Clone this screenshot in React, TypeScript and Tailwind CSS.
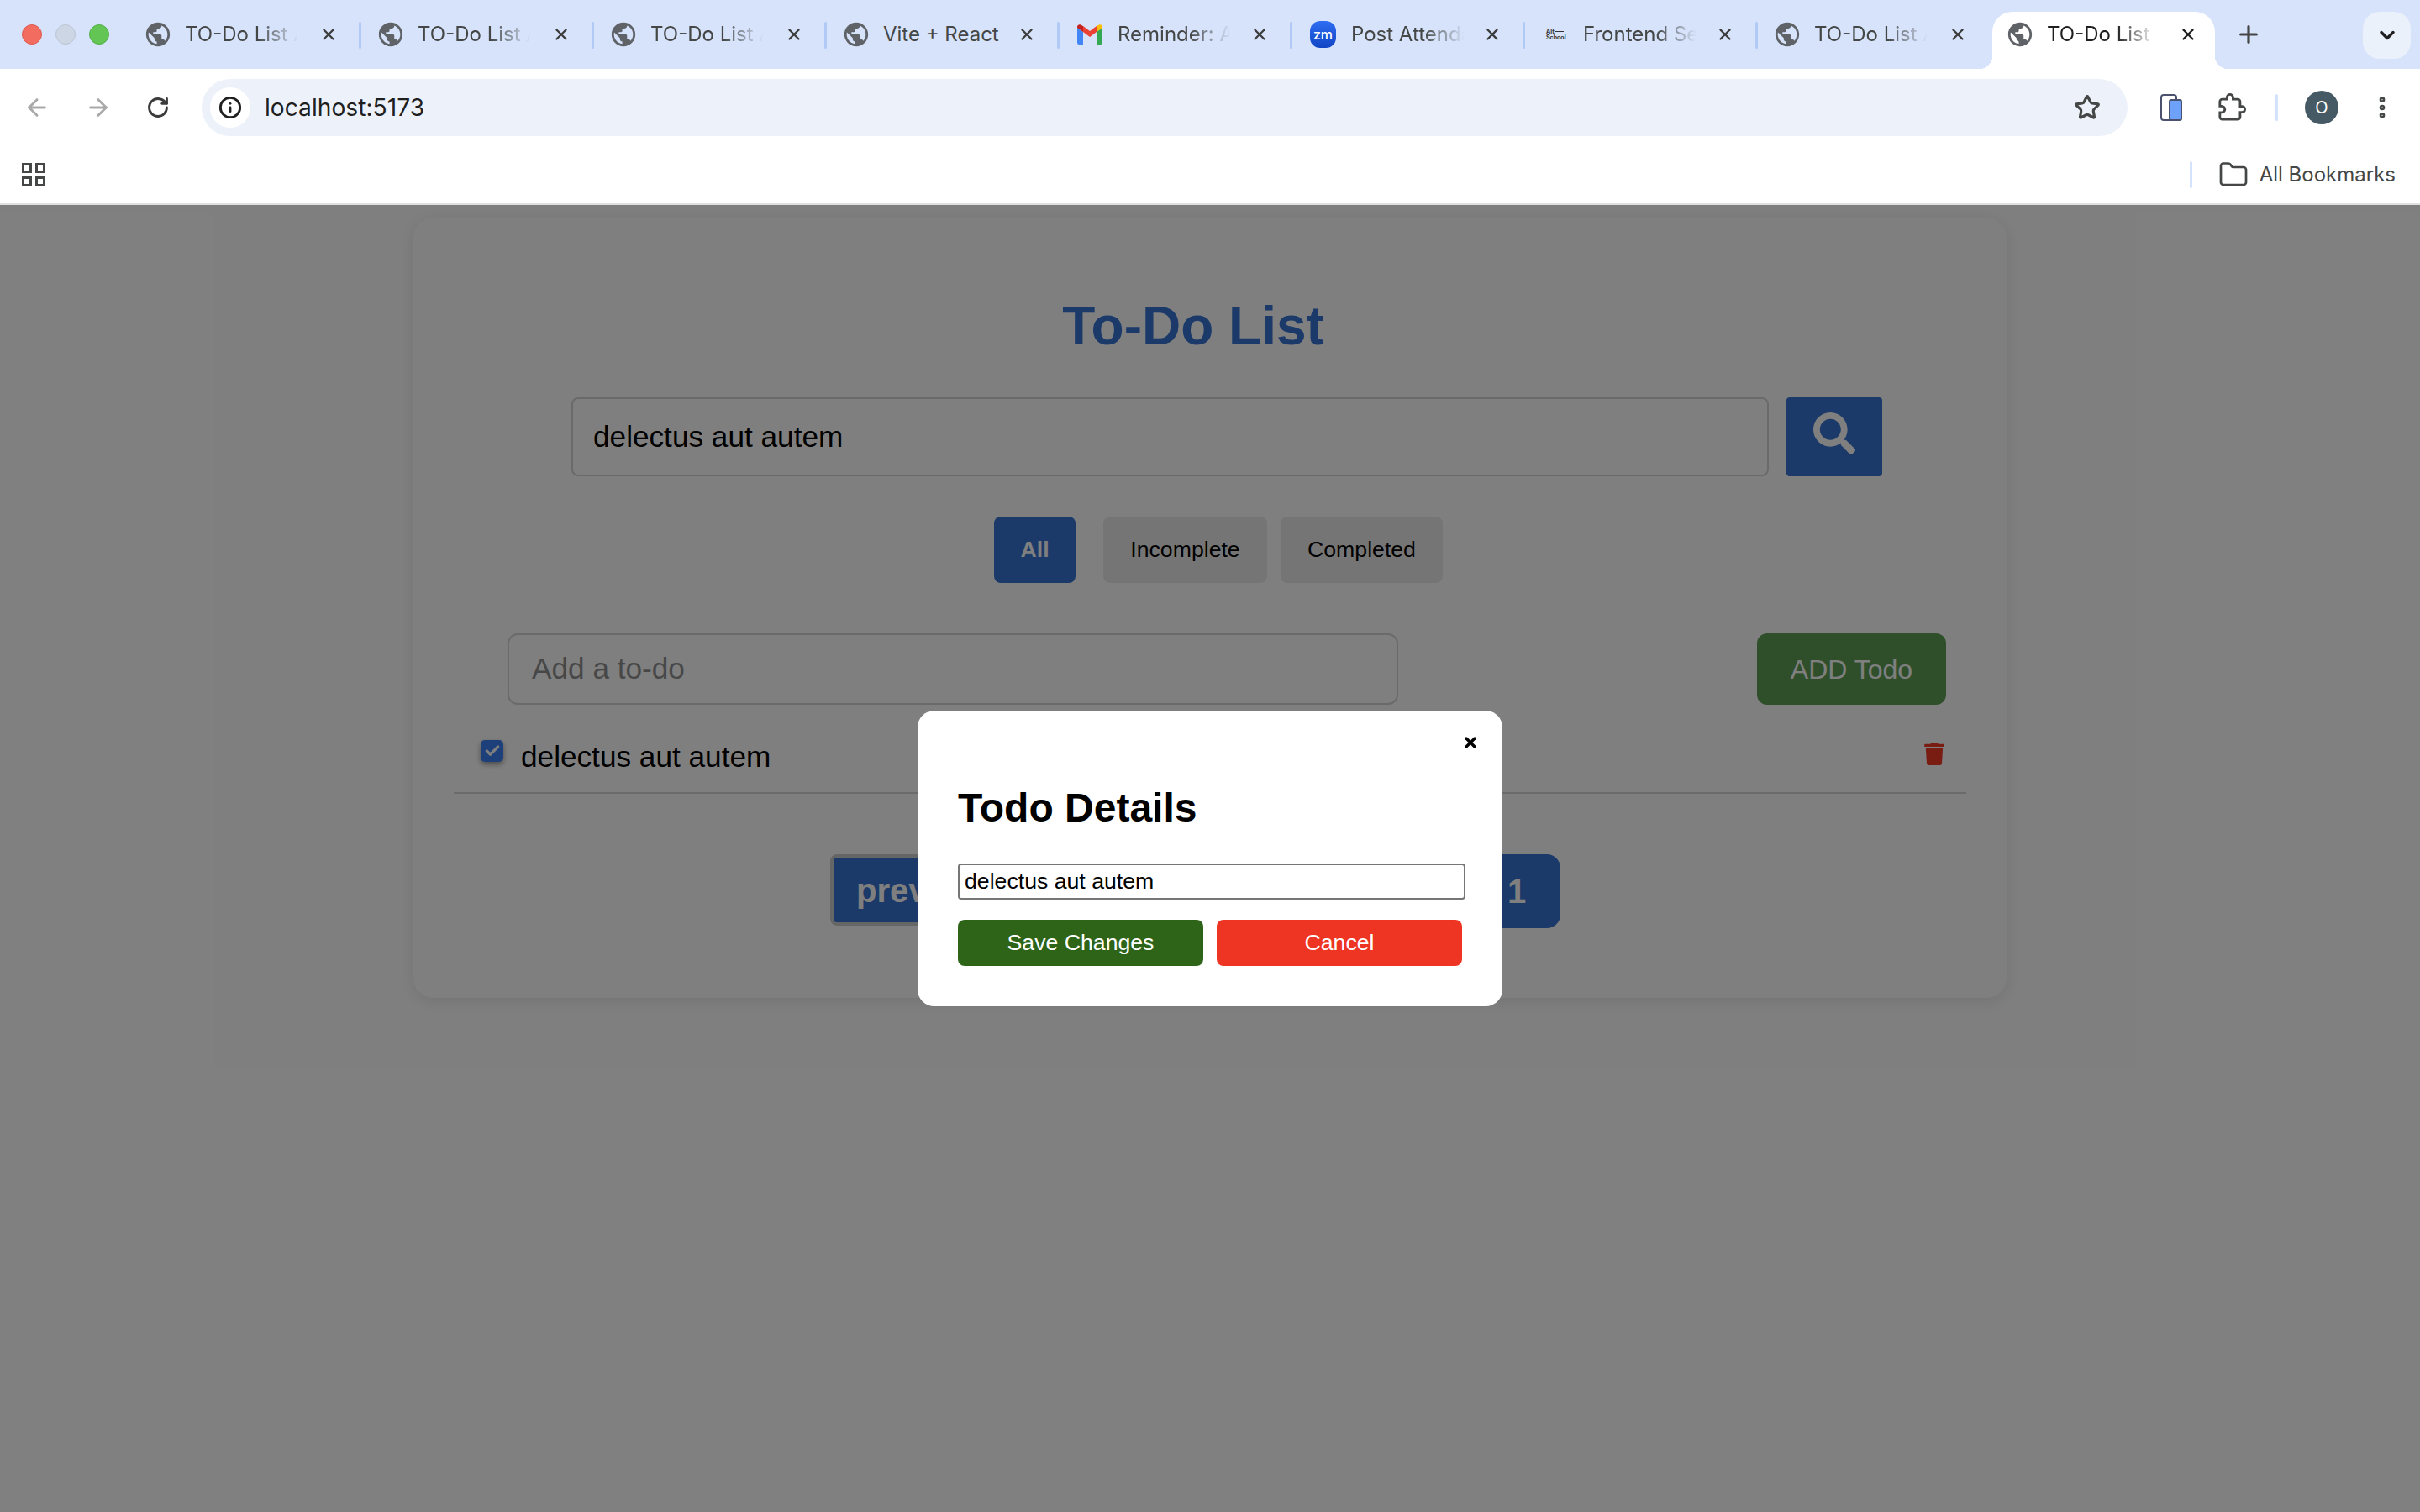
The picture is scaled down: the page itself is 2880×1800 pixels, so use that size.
import { ArrowLeft, ArrowRight, Check, ChevronDown, EllipsisVertical, Folder, Info, Plus, RotateCw, Star, X } from "lucide-react";
import { FaSearch, FaTrash } from "react-icons/fa";

const CHROME_FONT = "font-['Inter','Liberation_Sans',sans-serif]";

function Globe() {
  return (
    <svg viewBox="0 0 24 24" className="w-[34px] h-[34px] shrink-0 -ml-[3px] -mr-[3px]" fill="#5f6368">
      <path d="M12 2C6.48 2 2 6.48 2 12s4.48 10 10 10 10-4.48 10-10S17.52 2 12 2zm-1 17.93c-3.95-.49-7-3.85-7-7.93 0-.62.08-1.21.21-1.79L9 15v1c0 1.1.9 2 2 2v1.93zm6.9-2.54c-.26-.81-1-1.39-1.9-1.39h-1v-3c0-.55-.45-1-1-1H8v-2h2c.55 0 1-.45 1-1V7h2c1.1 0 2-.9 2-2v-.41c2.93 1.19 5 4.06 5 7.41 0 2.08-.8 3.97-2.1 5.39z" />
    </svg>
  );
}

function Gmail() {
  return (
    <svg viewBox="0 0 30 24" className="w-[30px] h-[24px] shrink-0">
      <path fill="#4285f4" d="M0 4v17.5A2.5 2.5 0 0 0 2.500 24H7V9z" />
      <path fill="#34a853" d="M23 9v15h4.500a2.500 2.500 0 0 0 2.500-2.500V4z" />
      <path fill="#ea4335" d="M7 9l8 6 8-6V2l-8 6-8-6z" />
      <path fill="#c5221f" d="M0 4l7 5V2L4.500.700C2.500-.6 0 .8 0 3.200z" />
      <path fill="#fbbc04" d="M30 4l-7 5V2l2.500-1.300C27.500-.6 30 .8 30 3.200z" />
    </svg>
  );
}

function Zoom() {
  return (
    <div className="w-[31px] h-[32px] shrink-0 rounded-[12px] bg-gradient-to-b from-[#2f6df2] to-[#1044c4] flex items-center justify-center text-white text-[16px] font-medium leading-none">
      zm
    </div>
  );
}

function AltSchool() {
  return (
    <div className="w-[30px] shrink-0 flex flex-col items-start pl-1 text-[7px] font-bold leading-[7px] text-[#333]">
      <span className="flex items-center gap-[1px]">Alt<span className="w-[10px] h-[1px] bg-[#333]" /></span>
      <span>School</span>
    </div>
  );
}

const TABS = [
  { title: "TO-Do List App", icon: <Globe /> },
  { title: "TO-Do List App", icon: <Globe /> },
  { title: "TO-Do List App", icon: <Globe /> },
  { title: "Vite + React", icon: <Globe /> },
  { title: "Reminder: Attend", icon: <Gmail /> },
  { title: "Post Attendance", icon: <Zoom /> },
  { title: "Frontend Session", icon: <AltSchool /> },
  { title: "TO-Do List App", icon: <Globe /> },
];

function Tab({ title, icon, last }: { title: string; icon: React.ReactNode; last: boolean }) {
  const fits = title.length < 13;
  return (
    <div className="w-[277px] h-[68px] flex items-center pl-[22px] pb-[14px] relative">
      {icon}
      <span
        className={
          fits
            ? "ml-[18px] w-[142px] overflow-hidden whitespace-nowrap text-[24px] text-[#444746]"
            : "ml-[18px] w-[140px] overflow-hidden whitespace-nowrap text-[24px] text-[#444746] [mask-image:linear-gradient(to_right,black_62%,transparent_96%)]"
        }
      >
        {title}
      </span>
      <X className="absolute left-[228px] top-[16px] text-[#3c3c3c]" size={22} strokeWidth={2.6} />
      {!last && <span className="absolute -right-[1px] top-[12px] w-[3px] h-[32px] rounded-full bg-[#b0c9f5]" />}
    </div>
  );
}

function TabStrip() {
  return (
    <div className="h-[82px] bg-[#d6e3fb] flex items-end relative">
      <div className="absolute left-[26px] top-[29px] flex gap-[16px]">
        <span className="w-[24px] h-[24px] rounded-full bg-[#f36c60] border border-[#dd5a4f]" />
        <span className="w-[24px] h-[24px] rounded-full bg-[#cdd6e4] border border-[#bcc5d3]" />
        <span className="w-[24px] h-[24px] rounded-full bg-[#62c554] border border-[#55b048]" />
      </div>
      <div className="flex pl-[152px]">
        {TABS.map((t, i) => (
          <Tab key={i} title={t.title} icon={t.icon} last={i === TABS.length - 1} />
        ))}
        {/* active tab */}
        <div className="w-[265px] h-[68px] ml-[3px] bg-white rounded-t-[24px] flex items-center pl-[19px] pb-[14px] relative">
          <span className="absolute -left-[16px] bottom-0 w-[16px] h-[16px] bg-[radial-gradient(circle_at_0_0,transparent_16px,white_16.500px)]" />
          <span className="absolute -right-[16px] bottom-0 w-[16px] h-[16px] bg-[radial-gradient(circle_at_100%_0,transparent_16px,white_16.500px)]" />
          <Globe />
          <span className="ml-[18px] w-[134px] overflow-hidden whitespace-nowrap text-[24px] text-[#1f1f1f] [mask-image:linear-gradient(to_right,black_62%,transparent_96%)]">
            TO-Do List App
          </span>
          <X className="absolute left-[222px] top-[16px] text-[#1f1f1f]" size={22} strokeWidth={2.6} />
        </div>
      </div>
      <Plus className="absolute left-[2660px] top-[25px] text-[#444746]" size={32} strokeWidth={2.4} />
      <div className="absolute left-[2812px] top-[14px] w-[57px] h-[56px] rounded-[20px] bg-[#ebf1fb] flex items-center justify-center">
        <ChevronDown className="text-[#1f1f1f]" size={28} strokeWidth={3} />
      </div>
    </div>
  );
}

function Toolbar() {
  return (
    <div className="h-[92px] flex items-center">
      <ArrowLeft className="ml-[28px] text-[#a9a9a9]" size={32} strokeWidth={2.2} />
      <ArrowRight className="ml-[41px] text-[#a9a9a9]" size={32} strokeWidth={2.2} />
      <RotateCw className="ml-[41px] text-[#3c3c3c]" size={28} strokeWidth={2.4} />
      <div className="ml-[38px] w-[2292px] h-[68px] rounded-full bg-[#edf2fa] flex items-center pl-[10px]">
        <div className="w-[48px] h-[48px] rounded-full bg-white flex items-center justify-center">
          <Info className="text-[#1f1f1f]" size={28} strokeWidth={2.4} />
        </div>
        <span className="ml-[17px] text-[28.200px] leading-none text-[#1f1f1f]">localhost:5173</span>
        <Star className="ml-auto mr-[32px] text-[#444746]" size={32} strokeWidth={2.4} />
      </div>
      {/* side panel icon */}
      <div className="ml-[39px] w-[26px] h-[32px] relative shrink-0">
        <span className="absolute left-0 top-0 w-[20px] h-[32px] rounded-[4px] border-2 border-[#4a5270] bg-white" />
        <span className="absolute left-[10px] top-[6px] w-[16px] h-[26px] rounded-[3px] border-2 border-[#4a5270] bg-[#6ea2fa]" />
      </div>
      <svg viewBox="0 0 24 24" className="ml-[42px] w-[34px] h-[34px] shrink-0" fill="none" stroke="#444746" strokeWidth="2">
        <path d="M20.500 11H19V7c0-1.100-.9-2-2-2h-4V3.500a2.500 2.500 0 0 0-5 0V5H4c-1.100 0-2 .9-2 2v3.800h1.500a2.700 2.700 0 0 1 0 5.400H2V20c0 1.100.9 2 2 2h13c1.100 0 2-.9 2-2v-4h1.500a2.500 2.500 0 0 0 0-5z" />
      </svg>
      <span className="ml-[35px] w-[3px] h-[32px] rounded-full bg-[#d3e3fd]" />
      <div className="ml-[32px] w-[40px] h-[40px] rounded-full bg-[#455a64] flex items-center justify-center text-white text-[20px] leading-none">
        O
      </div>
      <EllipsisVertical className="ml-[36px] text-[#444746]" size={32} strokeWidth={3} />
    </div>
  );
}

function BookmarksBar() {
  return (
    <div className="h-[68px] flex items-center border-b-2 border-[#e0e0e0] box-content">
      <div className="ml-[26px] grid grid-cols-2 gap-[4px] w-[28px]">
        <span className="h-[12px] border-[3px] border-[#444746]" />
        <span className="h-[12px] border-[3px] border-[#444746]" />
        <span className="h-[12px] border-[3px] border-[#444746]" />
        <span className="h-[12px] border-[3px] border-[#444746]" />
      </div>
      <span className="ml-auto w-[3px] h-[32px] rounded-full bg-[#d3e3fd]" />
      <Folder className="ml-[31px] text-[#444746]" size={36} strokeWidth={1.8} />
      <span className="ml-[13px] mr-[29px] text-[24px] leading-none text-[#444746]">All Bookmarks</span>
    </div>
  );
}

function TodoCard() {
  return (
    <div className="w-[1896px] mx-auto mt-[15px] bg-white rounded-[24px] shadow-[0_4px_20px_rgba(0,0,0,0.1)] px-[48px] pt-[97px] pb-[83px]">
      <h1 className="pr-[40px] text-center text-[64px] leading-none font-bold text-[#3675d3]">To-Do List</h1>

      <div className="mt-[53px] ml-[140px] flex gap-[21px]">
        <input
          readOnly
          value="delectus aut autem"
          className="w-[1425px] h-[94px] px-[24px] rounded-[8px] border-2 border-[#d4d4d4] bg-white text-[35.200px] text-black outline-none"
        />
        <button className="w-[114px] h-[94px] rounded-[4px] bg-[#3675d3] text-white flex items-center justify-center pb-[8px]">
          <FaSearch size={50} />
        </button>
      </div>

      <div className="mt-[48px] ml-[643px] flex">
        <button className="w-[97px] h-[79px] rounded-[8px] pb-[2px] bg-[#3675d3] text-white text-[26.670px] font-bold">All</button>
        <button className="ml-[33px] w-[195px] h-[79px] rounded-[8px] pb-[2px] bg-[#ebebeb] text-black text-[26.670px]">Incomplete</button>
        <button className="ml-[16px] w-[193px] h-[79px] rounded-[8px] pb-[2px] bg-[#ebebeb] text-black text-[26.670px]">Completed</button>
      </div>

      <div className="mt-[60px] ml-[64px] mr-[24px] flex justify-between">
        <input
          readOnly
          placeholder="Add a to-do"
          className="w-[1060px] h-[85px] px-[27px] pb-[2px] rounded-[12px] border-2 border-[#d4d4d4] bg-white text-[35.200px] placeholder:text-[#8f8f8f] outline-none"
        />
        <button className="w-[225px] h-[85px] rounded-[12px] bg-[#5e9f54] text-white text-[32px]">ADD Todo</button>
      </div>

      <div className="mt-[20px] h-[86px] border-b-2 border-[#d6d6d6] flex items-start pl-[32px] pr-[26px]">
        <span className="mt-[22px] w-[27px] h-[26px] rounded-[5px] bg-[#3a7ef5] shadow-[0_3px_6px_rgba(0,0,0,0.4)] flex items-center justify-center text-white">
          <Check size={20} strokeWidth={4} />
        </span>
        <span className="ml-[21px] mt-[21px] text-[35.200px] leading-[42px] text-black">delectus aut autem</span>
        <FaTrash className="ml-auto mt-[25px] text-[#f23a26] w-[24px] h-[27px]" />
      </div>

      <div className="mt-[72px] ml-[448px] w-[869px] flex justify-between items-start">
        <button className="w-[320px] h-[85px] border-[4px] border-[#cccccc] rounded-[8px] bg-[#3675d3] text-white text-[40px] font-bold text-left pl-[27px]">
          prev
        </button>
        <button className="w-[104px] h-[88px] rounded-[16px] bg-[#3675d3] text-white text-[40px] font-bold">1</button>
      </div>
    </div>
  );
}

function TodoModal() {
  return (
    <div className="absolute inset-0 bg-black/50 flex items-center justify-center">
      <div className="relative w-[696px] h-[352px] bg-white rounded-[20px] pl-[48px] pt-[92px]">
        <X className="absolute right-[28px] top-[28px] text-black" size={20} strokeWidth={4} />
        <h2 className="text-[48px] leading-none font-bold text-black">Todo Details</h2>
        <input
          readOnly
          value="delectus aut autem"
          className="mt-[42px] block w-[604px] h-[43px] px-[6px] rounded-[4px] border-2 border-[#767676] text-[26.670px] text-black outline-none"
        />
        <div className="mt-[24px] flex gap-[16px]">
          <button className="w-[292px] h-[55px] rounded-[8px] pb-[1px] bg-[#2d6418] text-white text-[26.670px]">Save Changes</button>
          <button className="w-[292px] h-[55px] rounded-[8px] pb-[1px] bg-[#ee3524] text-white text-[26.670px]">Cancel</button>
        </div>
      </div>
    </div>
  );
}

export default function App() {
  return (
    <div className="w-[2880px] h-[1800px] flex flex-col overflow-hidden bg-white">
      <header className={CHROME_FONT}>
        <TabStrip />
        <div className="bg-white">
          <Toolbar />
          <BookmarksBar />
        </div>
      </header>
      <main className="relative flex-1 font-['Liberation_Sans',Arial,sans-serif]">
        <TodoCard />
        <TodoModal />
      </main>
    </div>
  );
}
